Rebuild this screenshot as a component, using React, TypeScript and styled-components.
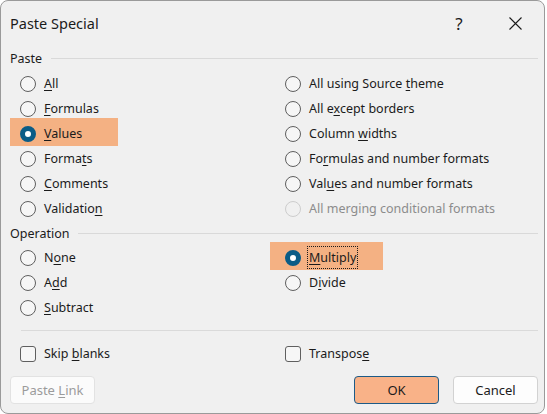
import React from "react";
import styled, { createGlobalStyle } from "styled-components";

const GlobalStyle = createGlobalStyle`
  html, body {
    margin: 0;
    padding: 0;
    background: #ffffff;
  }
  body {
    font-family: "Noto Sans", "Open Sans", sans-serif;
    color: #1b1b1b;
  }
`;

type Opt = { text: string; key?: number; checked?: boolean; disabled?: boolean; hl?: number; focus?: boolean };

const pasteLeft: Opt[] = [
  { text: "All", key: 0 },
  { text: "Formulas", key: 0 },
  { text: "Values", key: 0, checked: true, hl: 108 },
  { text: "Formats", key: 5 },
  { text: "Comments", key: 0 },
  { text: "Validation", key: 9 },
];

const pasteRight: Opt[] = [
  { text: "All using Source theme", key: 17 },
  { text: "All except borders", key: 5 },
  { text: "Column widths", key: 7 },
  { text: "Formulas and number formats", key: 2 },
  { text: "Values and number formats", key: 3 },
  { text: "All merging conditional formats", disabled: true },
];

const opLeft: Opt[] = [
  { text: "None", key: 1 },
  { text: "Add", key: 1 },
  { text: "Subtract", key: 0 },
];

const opRight: Opt[] = [
  { text: "Multiply", key: 0, checked: true, hl: 113, focus: true },
  { text: "Divide", key: 1 },
];

// texte avec la lettre d'accès soulignée
const withKey = (text: string, key?: number) => {
  if (key === undefined) return text;
  return (
    <>
      {text.slice(0, key)}
      <Key>{text[key]}</Key>
      {text.slice(key + 1)}
    </>
  );
};

const RadioList: React.FC<{ items: Opt[]; pad: number }> = ({ items, pad }) => (
  <Column>
    {items.map((o) => (
      <Row key={o.text} $pad={pad} $hl={o.hl}>
        <Radio $checked={o.checked} $disabled={o.disabled} />
        <Label $disabled={o.disabled} $focus={o.focus}>
          {withKey(o.text, o.key)}
        </Label>
      </Row>
    ))}
  </Column>
);

const App: React.FC = () => {
  return (
    <>
      <GlobalStyle />
      <Window>
        <TitleBar>
          <Title>Paste Special</Title>
          <TitleButton $w={66}>?</TitleButton>
          <TitleButton $w={46}>
            <svg width="13" height="13" viewBox="0 0 13 13">
              <path d="M0.5 0.5 L12.5 12.5 M12.5 0.5 L0.5 12.5" stroke="#1b1b1b" strokeWidth="1.1" fill="none" />
            </svg>
          </TitleButton>
        </TitleBar>

        <SectionHead $h={26}>
          <span>Paste</span>
          <Rule />
        </SectionHead>
        <Options>
          <RadioList items={pasteLeft} pad={10} />
          <RadioList items={pasteRight} pad={15} />
        </Options>

        <SectionHead $h={24}>
          <span>Operation</span>
          <Rule />
        </SectionHead>
        <Options>
          <RadioList items={opLeft} pad={10} />
          <RadioList items={opRight} pad={15} />
        </Options>

        <Divider />

        <Options>
          <Row $pad={10}>
            <Check />
            <Label>Skip {withKey("blanks", 0)}</Label>
          </Row>
          <Row $pad={15}>
            <Check />
            <Label>{withKey("Transpose", 8)}</Label>
          </Row>
        </Options>

        <Footer>
          <Button $variant="disabled">
            <span>Paste {withKey("Link", 0)}</span>
          </Button>
          <Spacer />
          <Button $variant="primary">OK</Button>
          <Button>Cancel</Button>
        </Footer>
      </Window>
    </>
  );
};

// Styles
const Window = styled.div`
  box-sizing: border-box;
  width: 545px;
  height: 414px;
  border: 1px solid #9a9a9a;
  border-radius: 8px;
  background: #f0f0f0;
  padding: 0 6px 0 9px;
  display: flex;
  flex-direction: column;
  font-size: 12.5px;
`;

const TitleBar = styled.div`
  height: 44px;
  display: flex;
  align-items: center;
`;

const Title = styled.div`
  flex: 1;
  font-size: 14.5px;
  padding-bottom: 1px;
`;

const TitleButton = styled.div<{ $w: number }>`
  width: ${(p) => p.$w}px;
  height: 40px;
  display: flex;
  align-items: center;
  justify-content: center;
  font-size: 17px;
  color: #1b1b1b;
`;

const SectionHead = styled.div<{ $h: number }>`
  height: ${(p) => p.$h}px;
  display: flex;
  align-items: center;
  gap: 9px;
  span {
    white-space: nowrap;
  }
`;

const Rule = styled.div`
  flex: 1;
  height: 1px;
  background: #d9d9d9;
`;

const Options = styled.div`
  display: grid;
  grid-template-columns: 260px 1fr;
`;

const Column = styled.div`
  display: flex;
  flex-direction: column;
`;

const Row = styled.div<{ $pad: number; $hl?: number }>`
  box-sizing: border-box;
  height: 25px;
  display: flex;
  align-items: center;
  gap: 8px;
  padding-left: ${(p) => p.$pad}px;
  width: ${(p) => (p.$hl ? `${p.$hl}px` : "auto")};
  background: ${(p) => (p.$hl ? "#f4b183" : "transparent")};
  box-shadow: ${(p) => (p.$hl ? "0 -3px 0 0 #f4b183" : "none")};
`;

const Radio = styled.span<{ $checked?: boolean; $disabled?: boolean }>`
  box-sizing: border-box;
  width: 16px;
  height: 16px;
  flex: none;
  border-radius: 50%;
  border: ${(p) => (p.$checked ? "5px solid #0b5c86" : `1px solid ${p.$disabled ? "#cdcdcd" : "#5f5f5f"}`)};
  background: ${(p) => (p.$checked ? "#ffffff" : p.$disabled ? "#f0f0f0" : "#f6f6f6")};
`;

const Check = styled.span`
  box-sizing: border-box;
  width: 16px;
  height: 16px;
  flex: none;
  border-radius: 3px;
  border: 1px solid #5f5f5f;
  background: #f6f6f6;
`;

const Label = styled.span<{ $disabled?: boolean; $focus?: boolean }>`
  white-space: nowrap;
  color: ${(p) => (p.$disabled ? "#8c8c8c" : "#1b1b1b")};
  border: 1px dotted ${(p) => (p.$focus ? "#1b1b1b" : "transparent")};
  padding: 2px 1px 2px;
  margin-left: -2px;
`;

const Key = styled.span`
  text-decoration: underline;
  text-underline-offset: 2px;
`;

const Divider = styled.div`
  height: 1px;
  background: #dadada;
  margin: 10px 0 10px 11px;
`;

const Footer = styled.div`
  display: flex;
  align-items: center;
  gap: 14px;
  margin-top: 10px;
`;

const Spacer = styled.div`
  flex: 1;
`;

const Button = styled.div<{ $variant?: "primary" | "disabled" }>`
  box-sizing: border-box;
  width: 85px;
  height: 28px;
  display: flex;
  align-items: center;
  justify-content: center;
  border-radius: 4px;
  font-size: 13px;
  border: 1px solid
    ${(p) => (p.$variant === "primary" ? "#1d5b87" : p.$variant === "disabled" ? "#e2e2e2" : "#d2d2d2")};
  background: ${(p) => (p.$variant === "primary" ? "#f9b288" : p.$variant === "disabled" ? "#fbfbfb" : "#fdfdfd")};
  color: ${(p) => (p.$variant === "disabled" ? "#9b9b9b" : "#1b1b1b")};
`;

export default App;
